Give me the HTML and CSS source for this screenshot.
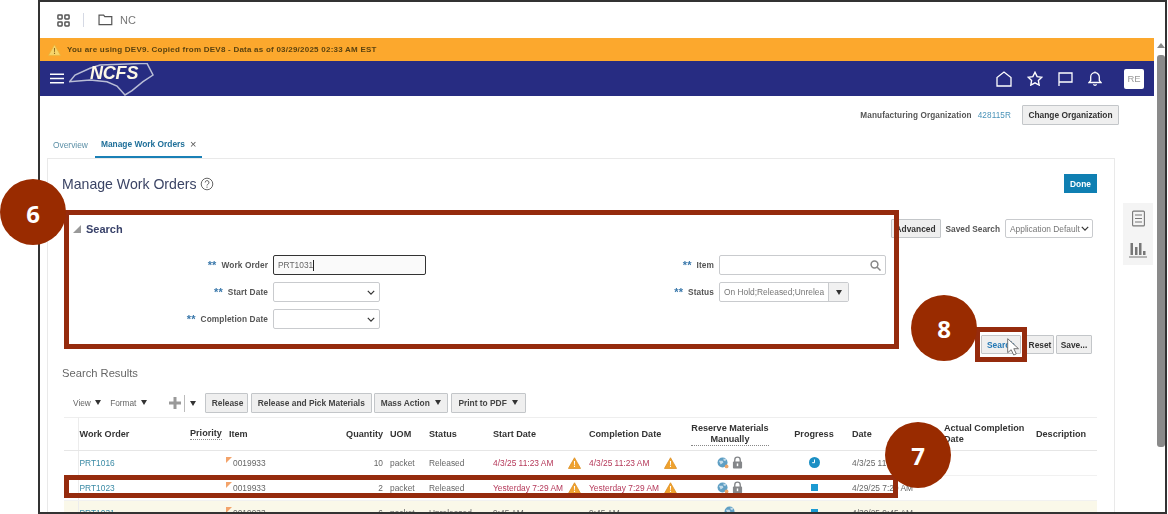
FILE: index.html
```html
<!DOCTYPE html>
<html lang="en">
<head>
<meta charset="utf-8">
<title>Manage Work Orders</title>
<link rel="stylesheet" href="styles.css">
</head>
<body>
<svg class="defs" width="0" height="0" aria-hidden="true">
  <symbol id="warn" viewBox="0 0 14 13"><path d="M7 .8 13.600 12.400H.4Z" fill="#f0a22e" stroke="#d98a1c" stroke-width=".8"/><path d="M6.400 4.200h1.200l-.2 4.600h-.8ZM6.400 9.600h1.200v1.300H6.400Z" fill="#fff"/></symbol>
  <symbol id="warn-pale" viewBox="0 0 14 13"><path d="M7 .8 13.600 12.400H.4Z" fill="#f7d56a" stroke="#e8b53c" stroke-width=".8"/><path d="M6.400 4.200h1.200l-.2 4.600h-.8ZM6.400 9.600h1.200v1.300H6.400Z" fill="#8a6a20"/></symbol>
  <symbol id="globe" viewBox="0 0 13 13"><circle cx="6" cy="6" r="5.400" fill="#5f9fc4"/><path d="M2 4h4l1 2-3 2-1-2ZM7 1.500l3 1-1 2-2-1Z" fill="#c4dcea"/><circle cx="10.400" cy="10.200" r="2" fill="#eaa56a"/></symbol>
  <symbol id="lock" viewBox="0 0 12 14"><path d="M3 6.500V4.200a3 3 0 0 1 6 0v2.300" fill="none" stroke="#85878a" stroke-width="1.500"/><rect x="1" y="6" width="10" height="7.500" rx="1" fill="#85878a"/><rect x="5.200" y="8" width="1.600" height="3" fill="#fff"/></symbol>
  <symbol id="chev" viewBox="0 0 10 6"><path d="M1 1l4 4 4-4" fill="none" stroke="#333" stroke-width="1.500"/></symbol>
</svg>
<div class="frame">
  <div class="app">
    <header class="topbar">
      <svg class="icon-grid" width="13" height="13" viewBox="0 0 14 14" fill="none" stroke="#555" stroke-width="1.600"><rect x="1" y="1" width="4.500" height="4.500" rx=".8"/><rect x="8.500" y="1" width="4.500" height="4.500" rx=".8"/><rect x="1" y="8.500" width="4.500" height="4.500" rx=".8"/><rect x="8.500" y="8.500" width="4.500" height="4.500" rx=".8"/></svg>
      <span class="topbar-sep"></span>
      <svg width="15" height="12" viewBox="0 0 16 13" fill="none" stroke="#555" stroke-width="1.300"><path d="M1 11.600V1.200h5l1.200 1.600h7.600v8.800Z"/></svg>
      <span class="topbar-name">NC</span>
    </header>
    <div class="banner">
      <svg width="13" height="12" viewBox="0 0 14 13"><use href="#warn-pale"/></svg>
      <span>You are using DEV9. Copied from DEV8 - Data as of 03/29/2025 02:33 AM EST</span>
    </div>
    <nav class="navbar">
      <svg width="14" height="11" viewBox="0 0 14 11" fill="none" stroke="#fff" stroke-width="1.500"><path d="M0 1.200h14M0 5.500h14M0 9.800h14"/></svg>
      <div class="logo">
        <svg width="86" height="33" viewBox="0 0 86 33" fill="none" stroke="#b9bdd6" stroke-width="1.500"><path d="M.5 18.700 6 12l15-6.700L31 2l47-1.700L84 12l-10 6.700-11 9-7 4.300-8-9-10-4.300L21 17Z"/></svg>
        <span class="logo-text">NCFS</span>
      </div>
      <div class="nav-icons">
        <svg width="16" height="16" viewBox="0 0 16 16" fill="none" stroke="#fff" stroke-width="1.300"><path d="M1 15V6.500L8 1l7 5.500V15Z"/></svg>
        <svg width="16" height="15" viewBox="0 0 16 15" fill="none" stroke="#fff" stroke-width="1.400"><path d="m8 1.300 2.100 4.300 4.700.6-3.400 3.300.8 4.600L8 11.900l-4.200 2.200.8-4.600L1.200 6.200l4.700-.6Z"/></svg>
        <svg width="15" height="14" viewBox="0 0 15 14" fill="none" stroke="#fff" stroke-width="1.300"><path d="M1 14V1h13v9H1"/></svg>
        <svg width="14" height="15" viewBox="0 0 14 15" fill="none" stroke="#fff" stroke-width="1.300"><path d="M1 11.500h12l-1.700-2V6a4.300 4.300 0 0 0-8.600 0v3.500ZM7 .6v1M5.500 13.300a1.600 1.600 0 0 0 3 0"/></svg>
        <span class="avatar">RE</span>
      </div>
    </nav>
    <div class="orgbar">
      <span class="org-label">Manufacturing Organization</span>
      <a class="org-code">428115R</a>
      <button class="btn btn-org">Change Organization</button>
    </div>
    <div class="tabs">
      <span class="tab">Overview</span>
      <span class="tab tab-active">Manage Work Orders <i class="tab-x">×</i></span>
    </div>
    <div class="workspace">
      <main class="card">
        <div class="title-row">
          <h1 class="title">Manage Work Orders</h1>
          <svg width="14" height="14" viewBox="0 0 14 14" fill="none" stroke="#666" stroke-width="1"><circle cx="7" cy="7" r="5.800"/><path d="M5.200 5.500a1.900 1.900 0 1 1 2.700 1.700c-.6.300-.9.700-.9 1.300M7 9.600v1.200"/></svg>
          <button class="btn-done">Done</button>
        </div>
        <div class="search-head">
          <span class="tri"></span>
          <h2 class="search-title">Search</h2>
          <button class="btn btn-adv">Advanced</button>
          <span class="label saved-label">Saved Search</span>
          <div class="select select-saved"><span>Application Default</span><svg width="8" height="5"><use href="#chev"/></svg></div>
        </div>
        <div class="form">
          <div class="form-col form-left">
            <div class="field"><label class="label"><b>**</b><span>Work Order</span></label><div class="input input-focus">PRT1031<span class="caret"></span></div></div>
            <div class="field"><label class="label"><b>**</b><span>Start Date</span></label><div class="select select-date"><span></span><svg width="8" height="5"><use href="#chev"/></svg></div></div>
            <div class="field"><label class="label"><b>**</b><span>Completion Date</span></label><div class="select select-date"><span></span><svg width="8" height="5"><use href="#chev"/></svg></div></div>
          </div>
          <div class="form-col form-right">
            <div class="field"><label class="label"><b>**</b><span>Item</span></label><div class="input input-item"><svg width="11" height="11" viewBox="0 0 11 11" fill="none" stroke="#888" stroke-width="1.500"><circle cx="4.500" cy="4.500" r="3.400"/><path d="m7 7 3.500 3.500"/></svg></div></div>
            <div class="field"><label class="label"><b>**</b><span>Status</span></label><div class="combo"><span class="combo-text">On Hold;Released;Unrelea</span><span class="combo-arrow"><i class="down"></i></span></div></div>
          </div>
        </div>
        <div class="search-actions">
          <button class="btn btn-search">Search</button>
          <button class="btn btn-reset">Reset</button>
          <button class="btn btn-save">Save...</button>
        </div>
        <h3 class="results-title">Search Results</h3>
        <div class="toolbar">
          <span class="tool">View <i class="down"></i></span>
          <span class="tool">Format <i class="down"></i></span>
          <svg class="tool-plus" width="12" height="12" viewBox="0 0 12 12"><path d="M4.500 0h3v4.500H12v3H7.500V12h-3V7.500H0v-3h4.500Z" fill="#999"/></svg>
          <span class="tool-sep"></span>
          <i class="down tool-down"></i>
          <button class="btn btn-tool">Release</button>
          <button class="btn btn-tool">Release and Pick Materials</button>
          <button class="btn btn-tool">Mass Action <i class="down"></i></button>
          <button class="btn btn-tool">Print to PDF <i class="down"></i></button>
        </div>
        <table class="table">
          <colgroup>
            <col class="c-sel"><col class="c-wo"><col class="c-pri"><col class="c-item"><col class="c-qty"><col class="c-uom"><col class="c-stat"><col class="c-start"><col class="c-comp"><col class="c-res"><col class="c-prog"><col class="c-date"><col class="c-act"><col class="c-desc">
          </colgroup>
          <thead>
            <tr>
              <th class="sel"></th><th>Work Order</th><th class="pri-th"><span class="dotted">Priority</span></th><th class="item-th">Item</th><th class="num">Quantity</th><th>UOM</th><th>Status</th><th>Start Date</th><th>Completion Date</th><th class="center"><span class="dotted reserve">Reserve Materials<br>Manually</span></th><th class="center prog">Progress</th><th>Date</th><th>Actual Completion Date</th><th>Description</th>
            </tr>
          </thead>
          <tbody>
            <tr>
              <td class="sel"></td><td><a class="link">PRT1016</a></td><td></td><td class="item"><span class="flag"></span>0019933</td><td class="num">10</td><td>packet</td><td>Released</td>
              <td class="late"><span class="date-cell">4/3/25 11:23 AM<svg width="13" height="12"><use href="#warn"/></svg></span></td>
              <td class="late"><span class="date-cell">4/3/25 11:23 AM<svg width="13" height="12"><use href="#warn"/></svg></span></td>
              <td class="center"><svg width="12" height="12"><use href="#globe"/></svg> <svg width="11" height="13"><use href="#lock"/></svg></td>
              <td class="center prog"><svg width="11" height="11" viewBox="0 0 11 11"><circle cx="5.500" cy="5.500" r="5.500" fill="#1b8fc4"/><path d="M5.500 2.500v3.200H3.200" fill="none" stroke="#fff"/></svg></td>
              <td>4/3/25 11:23 AM</td><td></td><td></td>
            </tr>
            <tr>
              <td class="sel"></td><td><a class="link">PRT1023</a></td><td></td><td class="item"><span class="flag"></span>0019933</td><td class="num">2</td><td>packet</td><td>Released</td>
              <td class="late"><span class="date-cell">Yesterday 7:29 AM<svg width="13" height="12"><use href="#warn"/></svg></span></td>
              <td class="late"><span class="date-cell">Yesterday 7:29 AM<svg width="13" height="12"><use href="#warn"/></svg></span></td>
              <td class="center"><svg width="12" height="12"><use href="#globe"/></svg> <svg width="11" height="13"><use href="#lock"/></svg></td>
              <td class="center prog"><span class="stop"></span></td>
              <td>4/29/25 7:29 AM</td><td></td><td></td>
            </tr>
            <tr class="row-hl">
              <td class="sel"></td><td><a class="link">PRT1031</a></td><td></td><td class="item"><span class="flag"></span>0019933</td><td class="num">6</td><td>packet</td><td>Unreleased</td>
              <td>9:45 AM</td><td>9:45 AM</td>
              <td class="center"><svg width="12" height="12"><use href="#globe"/></svg></td>
              <td class="center prog"><span class="stop"></span></td>
              <td>4/30/25 9:45 AM</td><td></td><td></td>
            </tr>
          </tbody>
        </table>
      </main>
      <aside class="side">
        <span class="side-btn"><svg width="13" height="17" viewBox="0 0 13 16" fill="none" stroke="#777" stroke-width="1.100"><rect x=".6" y=".6" width="11.800" height="14.800" rx="1"/><path d="M3 4.500h7M3 8h7M3 11.500h7"/></svg></span>
        <span class="side-btn"><svg width="18" height="16" viewBox="0 0 18 16" fill="#777"><rect x="1.500" y="1" width="2.500" height="12"/><rect x="6" y="5" width="2.500" height="8"/><rect x="10" y="1" width="2.500" height="12"/><rect x="14" y="9" width="2.500" height="4"/><rect y="14.500" width="18" height="1"/></svg></span>
      </aside>
    </div>
  </div>
  <div class="scrollbar">
    <span class="scroll-up"></span>
    <span class="scroll-thumb"></span>
  </div>
</div>

<div class="anno anno-box box-search"></div>
<div class="anno anno-box box-btn"></div>
<div class="anno anno-box box-row"></div>
<div class="anno anno-num num-6">6</div>
<div class="anno anno-num num-7">7</div>
<div class="anno anno-num num-8">8</div>
<svg class="anno cursor" width="13" height="18" viewBox="0 0 13 18"><path d="M.7.7v14l3.500-3 2.500 5.300 2.600-1.100-2.500-5.200h4.700Z" fill="#fff" stroke="#666" stroke-width=".9"/></svg>
</body>
</html>
```
FILE: styles.css
```css
* { box-sizing: border-box; }
html, body { margin: 0; padding: 0; }
body {
  position: relative;
  width: 1168px;
  height: 514px;
  overflow: hidden;
  background: #fff;
  font-family: "Liberation Sans", Arial, sans-serif;
  color: #444;
}
.defs { position: absolute; }
.frame {
  display: flex;
  width: 1129px;
  height: 514px;
  margin-left: 38px;
  border: 2px solid #333;
  overflow: hidden;
  background: #fff;
}
.app {
  display: flex;
  flex-direction: column;
  width: 1114px;
  flex: none;
  filter: blur(.3px);
}
.topbar {
  display: flex;
  align-items: center;
  height: 36px;
  padding-left: 17px;
  flex: none;
}
.topbar-sep { width: 1px; height: 14px; margin: 0 14px 0 13px; background: #d5d9e4; }
.topbar-name { margin-left: 7px; font-size: 11px; color: #777; }
.banner {
  display: flex;
  align-items: center;
  gap: 6px;
  height: 23px;
  padding-left: 8px;
  flex: none;
  background: #fca82d;
  font-size: 8px;
  font-weight: bold;
  letter-spacing: .235px;
  color: #5b4310;
}
.navbar {
  display: flex;
  align-items: center;
  height: 35px;
  padding-left: 10px;
  flex: none;
  background: #272c82;
}
.logo {
  position: relative;
  display: flex;
  width: 86px;
  height: 33px;
  margin: 1px 0 0 5px;
}
.logo-text {
  position: absolute;
  left: 21px;
  top: 0;
  font-size: 18px;
  font-weight: bold;
  font-style: italic;
  color: #fdf8e6;
  letter-spacing: -.2px;
}
.nav-icons {
  display: flex;
  align-items: center;
  gap: 15px;
  margin-left: auto;
  padding-right: 10px;
}
.avatar {
  display: flex;
  align-items: center;
  justify-content: center;
  width: 20px;
  height: 20px;
  margin-left: 7px;
  border-radius: 2px;
  background: #fff;
  font-size: 9.500px;
  color: #999;
}
.orgbar {
  display: flex;
  align-items: center;
  justify-content: flex-end;
  height: 34px;
  padding: 4px 35px 0 0;
  flex: none;
  font-size: 8.200px;
  font-weight: bold;
  letter-spacing: .1px;
}
.org-label { color: #555; }
.org-code { margin: 0 11px 0 6px; color: #4a93b8; font-weight: normal; }
.btn {
  height: 20px;
  padding: 0;
  border: 1px solid #c3c6c9;
  border-radius: 1px;
  background: #efefef;
  font-family: inherit;
  font-size: 8.400px;
  font-weight: bold;
  color: #333;
}
.btn-org { width: 97px; }
.tabs {
  display: flex;
  height: 28px;
  padding-left: 7px;
  flex: none;
  font-size: 8.400px;
  align-items: stretch;
}
.tab { display: flex; align-items: center; padding: 2px 6px 0; color: #5b8fa6; }
.tab-active {
  margin-left: 1px;
  gap: 5px;
  padding: 2px 6px 0;
  border-bottom: 2px solid #1a80b6;
  color: #1f6f99;
  font-weight: bold;
}
.tab-x { font-style: normal; font-size: 11px; font-weight: normal; color: #555; line-height: 1; }
.workspace { display: flex; flex: 1; min-height: 0; padding-left: 7px; }
.card {
  width: 1068px;
  flex: none;
  padding: 15px 17px 0 14px;
  border: 1px solid #e9e9e9;
  border-bottom: 0;
  overflow: hidden;
}
.title-row { display: flex; align-items: center; gap: 4px; height: 19px; }
.title { margin: 0; font-size: 14.100px; font-weight: normal; color: #3b4465; }
.btn-done {
  width: 33px;
  height: 19px;
  margin-left: auto;
  padding: 0;
  border: 0;
  background: #0f7fb2;
  color: #fff;
  font-family: inherit;
  font-size: 8.400px;
  font-weight: bold;
}
.search-head { display: flex; align-items: center; height: 19px; margin-top: 26px; padding-left: 11px; }
.tri { width: 0; height: 0; margin-right: 5px; border-style: solid; border-width: 0 0 8px 8px; border-color: transparent transparent #999 transparent; }
.search-title { margin: 0; font-size: 11px; font-weight: bold; color: #39426a; }
.btn-adv { width: 50px; height: 19px; margin-left: auto; }
.label { display: flex; justify-content: flex-end; align-items: center; font-size: 8.300px; font-weight: bold; color: #555; letter-spacing: .1px; }
.label b { margin-right: 5px; font-size: 11px; line-height: 8px; color: #3a78ab; }
.saved-label { margin: 0 5px; letter-spacing: 0; }
.select {
  display: flex;
  align-items: center;
  justify-content: space-between;
  height: 20px;
  padding: 0 4px;
  border: 1px solid #c9cbce;
  border-radius: 2px;
  background: #fff;
  font-size: 8.400px;
  color: #777;
}
.select-saved { width: 88px; height: 19px; margin-right: 4px; padding-right: 3px; }
.select-date { width: 107px; }
.form { display: flex; margin-top: 17px; }
.form-col { display: flex; flex-direction: column; gap: 7px; }
.form-left { width: 438px; }
.form-right { width: 386px; }
.field { display: flex; align-items: center; gap: 5px; height: 20px; }
.form-left .label { width: 206px; }
.form-right .label { width: 214px; }
.input {
  display: flex;
  align-items: center;
  height: 20px;
  padding: 0 4px;
  border: 1px solid #c9cbce;
  border-radius: 2px;
  background: #fff;
  font-size: 8.400px;
  color: #666;
}
.input-focus { width: 153px; border: 1.500px solid #333; background: #fafafa; }
.caret { width: 1px; height: 11px; background: #222; }
.input-item { width: 167px; justify-content: flex-end; }
.combo { display: flex; width: 130px; height: 20px; border: 1px solid #c9cbce; border-radius: 2px; font-size: 8.400px; color: #777; }
.combo-text { display: flex; align-items: center; flex: 1; padding-left: 4px; white-space: nowrap; overflow: hidden; }
.combo-arrow { display: flex; align-items: center; justify-content: center; width: 20px; border-left: 1px solid #c9cbce; background: #f1f1f1; }
.down { display: inline-block; width: 0; height: 0; border-style: solid; border-width: 5px 3.500px 0; border-color: #333 transparent transparent; vertical-align: 1px; }
.search-actions { display: flex; justify-content: flex-end; margin-top: 6px; padding-right: 5px; }
.search-actions .btn { height: 19px; }
.btn-search { width: 40px; color: #2478b5; }
.btn-reset { width: 28px; margin-left: 5px; }
.btn-save { width: 36px; margin-left: 2px; }
.results-title { margin: 12px 0 0; font-size: 11.200px; line-height: 14px; font-weight: normal; color: #666; }
.toolbar { display: flex; align-items: center; height: 20px; margin-top: 13px; padding-left: 11px; font-size: 8.300px; color: #666; }
.tool { margin-right: 9px; white-space: nowrap; }
.tool .down { margin-left: 2px; }
.tool-plus { margin-left: 13px; }
.tool-sep { width: 1px; height: 17px; margin: 0 5px 0 3px; background: #bbb; }
.tool-down { margin-right: 9px; }
.btn-tool { padding: 0 6px; margin-right: 3px; white-space: nowrap; color: #444; }
.toolbar .btn-tool:nth-of-type(1) { width: 43px; }
.toolbar .btn-tool:nth-of-type(2) { width: 121px; margin-right: 2px; }
.toolbar .btn-tool:nth-of-type(3) { width: 74px; }
.toolbar .btn-tool:nth-of-type(4) { width: 75px; }
.btn-tool .down { margin-left: 3px; }
.table { width: 1033px; margin: 4px 0 0 2px; border-collapse: collapse; table-layout: fixed; font-size: 8.400px; color: #666; }
.c-sel { width: 14px; } .c-wo { width: 108px; } .c-pri { width: 40px; } .c-item { width: 114px; }
.c-qty { width: 49px; } .c-uom { width: 39px; } .c-stat { width: 64px; } .c-start { width: 96px; }
.c-comp { width: 104px; } .c-res { width: 76px; } .c-prog { width: 83px; } .c-date { width: 92px; }
.c-act { width: 92px; } .c-desc { width: 62px; }
th {
  height: 33px;
  padding: 0 3px 0 1px;
  border-top: 1px solid #eee;
  border-bottom: 1px solid #e6e6e6;
  text-align: left;
  font-size: 9.100px;
  font-weight: bold;
  line-height: 11px;
  color: #333;
}
td { height: 25px; padding: 0 3px 0 1px; border-bottom: 1px solid #f1f1f1; white-space: nowrap; overflow: hidden; }
th.sel, td.sel { padding: 0; border-right: 1px solid #ececec; }
th.num, td.num { padding-right: 6px; text-align: right; }
th.center, td.center { text-align: center; padding: 0; }
th.prog, td.prog { padding-left: 9px; }
th.pri-th { padding-left: 4px; }
.dotted { display: inline-block; border-bottom: 1px dotted #888; }
.reserve { white-space: nowrap; margin: 0 -6px; }
th.item-th { padding-left: 3px; }
td.item { position: relative; padding-left: 7px; }
.flag { position: absolute; left: 0; top: 6px; width: 0; height: 0; border-style: solid; border-width: 6px 6px 0 0; border-color: #f3a36a transparent transparent; }
.link { color: #3a8aa5; }
.late { color: #b5395a; overflow: visible; }
.date-cell { display: flex; align-items: center; justify-content: space-between; width: 88px; }
.stop { display: inline-block; width: 7px; height: 7px; background: #1b9ad2; }
.row-hl td { background: #faf8e9; }
.side { display: flex; flex-direction: column; align-items: center; width: 30px; margin: 45px 0 0 8px; flex: none; }
.side-btn { display: flex; align-items: center; justify-content: center; width: 30px; height: 31px; background: #f4f4f4; }
.scrollbar { position: relative; flex: 1; }
.scroll-up { position: absolute; left: 3px; top: 41px; width: 0; height: 0; border-style: solid; border-width: 0 4px 5px; border-color: transparent transparent #888; }
.scroll-thumb { position: absolute; left: 3px; top: 53px; width: 8px; height: 392px; border-radius: 3px; background: #8a8a8a; }
.anno { position: absolute; }
.anno-box { border: 5px solid #952b0d; }
.box-search { left: 64px; top: 210px; width: 835px; height: 139px; }
.box-btn { left: 975px; top: 327px; width: 52px; height: 35px; }
.box-row { left: 64px; top: 475px; width: 834px; height: 23px; }
.anno-num {
  display: flex;
  align-items: center;
  justify-content: center;
  width: 66px;
  height: 66px;
  border-radius: 50%;
  background: #992b00;
  color: #fff;
  font-family: "Open Sans", sans-serif;
  font-size: 24px;
  font-weight: bold;
}
.num-6 { left: 0; top: 179px; padding-top: 3px; }
.num-7 { left: 885px; top: 422px; }
.num-8 { left: 911px; top: 295px; }
.cursor { left: 1007px; top: 338px; }
```
